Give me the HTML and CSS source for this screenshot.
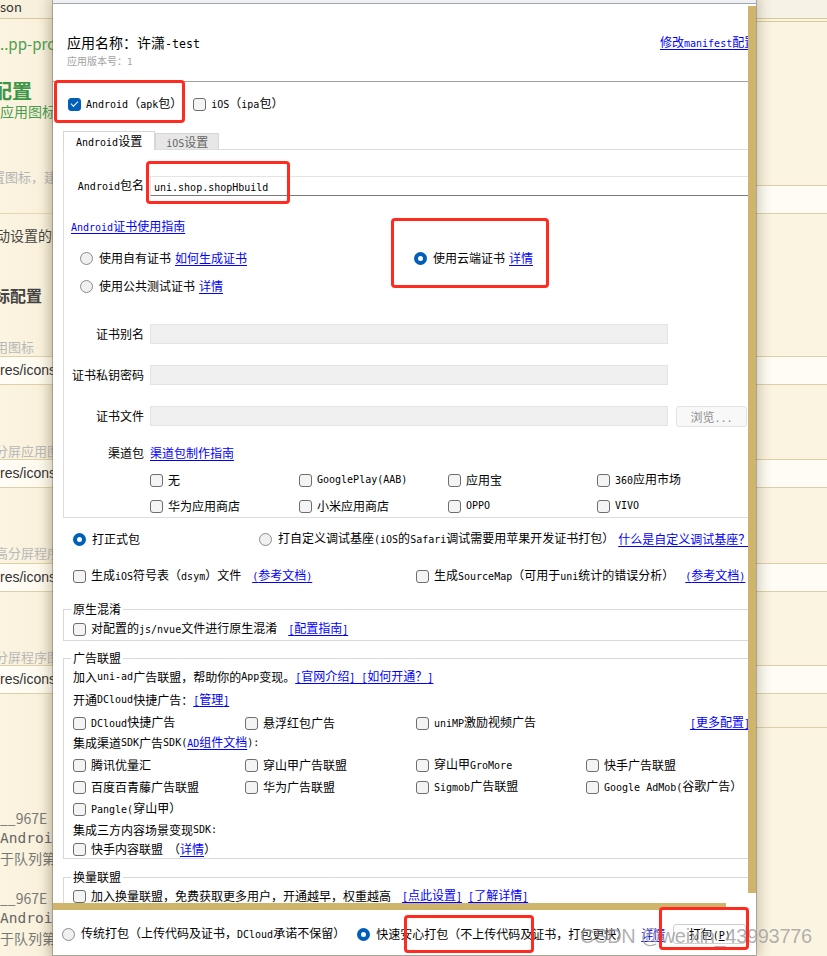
FILE: index.html
```html
<!DOCTYPE html>
<html lang="zh-CN">
<head>
<meta charset="utf-8">
<title>App云端打包</title>
<link rel="stylesheet" href="styles.css">
</head>
<body>
<div class="screen">
  <aside class="bgl">
    <div class="bgl-tab">son</div>
    <div class="bgl-path">..pp-proj</div>
    <div class="bgl-h1">配置</div>
    <div class="bgl-sub">应用图标配</div>
    <div class="bgl-hint">置图标，建议</div>
    <div class="bgl-txt">动设置的图</div>
    <div class="bgl-h2">标配置</div>
    <div class="bgl-lab l1">用图标</div>
    <div class="bgl-inp i1">res/icons/</div>
    <div class="bgl-lab l2">分屏应用图</div>
    <div class="bgl-inp">res/icons/</div>
    <div class="bgl-lab l3">高分屏程序</div>
    <div class="bgl-inp i3">res/icons/</div>
    <div class="bgl-lab l3">分屏程序图</div>
    <div class="bgl-inp">res/icons/</div>
    <div class="bgl-log g1"><p>__967E</p><p class="mono">Androi</p><p>于队列第</p></div>
    <div class="bgl-log g2"><p>__967E</p><p class="mono">Androi</p><p>于队列第</p></div>
  </aside>

  <section class="dlg">
    <div class="dlg-top"></div>
    <div class="dlg-body">
      <div class="main">
        <header class="head">
          <div class="title-row">
            <h1 class="app-name">应用名称：许潇<span class="e14">-test</span></h1>
            <a class="lnk" href="#">修改<span class="e">manifest</span>配置</a>
          </div>
          <p class="ver">应用版本号：<span class="e">1</span></p>
        </header>

        <div class="plat">
          <label class="ck"><i class="cb on"></i><span><span class="e">Android</span>（<span class="e">apk</span>包）</span></label>
          <label class="ck"><i class="cb"></i><span><span class="e">iOS</span>（<span class="e">ipa</span>包）</span></label>
        </div>

        <nav class="tabs">
          <span class="tab act"><span class="e">Android</span>设置</span>
          <span class="tab"><span class="e">iOS</span>设置</span>
        </nav>

        <div class="panel">
          <div class="frow pkg">
            <span class="flab"><span class="e">Android</span>包名</span>
            <span class="pkg-inp"><span class="e">uni.shop.shopHbuild</span></span>
          </div>
          <a class="lnk guide" href="#"><span class="e">Android</span>证书使用指南</a>
          <div class="certs">
            <label class="rb"><i class="ro"></i><span>使用自有证书<a class="lnk ml4" href="#">如何生成证书</a></span></label>
            <label class="rb"><i class="ro on"></i><span>使用云端证书<a class="lnk ml4" href="#">详情</a></span></label>
            <label class="rb"><i class="ro"></i><span>使用公共测试证书<a class="lnk ml4" href="#">详情</a></span></label>
          </div>
          <div class="frow f1"><span class="flab">证书别名</span><span class="finp"></span></div>
          <div class="frow f2"><span class="flab">证书私钥密码</span><span class="finp"></span></div>
          <div class="frow f3"><span class="flab">证书文件</span><span class="finp"></span><button class="browse" type="button">浏览<span class="e">...</span></button></div>
          <div class="frow chan-head"><span class="flab">渠道包</span><a class="lnk" href="#">渠道包制作指南</a></div>
          <div class="chans">
            <label class="ck"><i class="cb"></i><span>无</span></label>
            <label class="ck"><i class="cb"></i><span class="e">GooglePlay(AAB)</span></label>
            <label class="ck"><i class="cb"></i><span>应用宝</span></label>
            <label class="ck"><i class="cb"></i><span><span class="e">360</span>应用市场</span></label>
            <label class="ck"><i class="cb"></i><span>华为应用商店</span></label>
            <label class="ck"><i class="cb"></i><span>小米应用商店</span></label>
            <label class="ck"><i class="cb"></i><span class="e">OPPO</span></label>
            <label class="ck"><i class="cb"></i><span class="e">VIVO</span></label>
          </div>
        </div>

        <div class="runrow">
          <label class="rb w186"><i class="ro on"></i><span>打正式包</span></label>
          <label class="rb"><i class="ro"></i><span>打自定义调试基座<span class="e">(iOS</span>的<span class="e">Safari</span>调试需要用苹果开发证书打包）</span></label>
          <a class="lnk ml4" href="#">什么是自定义调试基座？</a>
        </div>

        <div class="optrow">
          <div class="c343">
            <label class="ck"><i class="cb"></i><span>生成<span class="e">iOS</span>符号表（<span class="e">dsym</span>）文件</span></label>
            <a class="lnk ml11" href="#"><span class="e">(</span>参考文档<span class="e">)</span></a>
          </div>
          <label class="ck"><i class="cb"></i><span>生成<span class="e">SourceMap</span>（可用于<span class="e">uni</span>统计的错误分析）</span></label>
          <a class="lnk ml11" href="#"><span class="e">(</span>参考文档<span class="e">)</span></a>
        </div>

        <fieldset class="fs fs1">
          <legend>原生混淆</legend>
          <div class="frow18">
            <label class="ck"><i class="cb"></i><span>对配置的<span class="e">js/nvue</span>文件进行原生混淆</span></label>
            <a class="lnk ml11" href="#"><span class="e">[</span>配置指南<span class="e">]</span></a>
          </div>
        </fieldset>

        <fieldset class="fs fs2">
          <legend>广告联盟</legend>
          <div class="arow">加入<span class="e">uni-ad</span>广告联盟，帮助你的<span class="e">App</span>变现。<a class="lnk" href="#"><span class="e">[</span>官网介绍<span class="e">] [</span>如何开通？<span class="e">]</span></a></div>
          <div class="arow m1">开通<span class="e">DCloud</span>快捷广告：<a class="lnk" href="#"><span class="e">[</span>管理<span class="e">]</span></a></div>
          <div class="arow g4 m1">
            <label class="ck"><i class="cb"></i><span><span class="e">DCloud</span>快捷广告</span></label>
            <label class="ck"><i class="cb"></i><span>悬浮红包广告</span></label>
            <label class="ck"><i class="cb"></i><span><span class="e">uniMP</span>激励视频广告</span></label>
            <a class="lnk more" href="#"><span class="e">[</span>更多配置<span class="e">]</span></a>
          </div>
          <div class="arow mm2">集成渠道<span class="e">SDK</span>广告<span class="e">SDK(</span><a class="lnk" href="#"><span class="e">AD</span>组件文档</a><span class="e">):</span></div>
          <div class="arow g4">
            <label class="ck"><i class="cb"></i><span>腾讯优量汇</span></label>
            <label class="ck"><i class="cb"></i><span>穿山甲广告联盟</span></label>
            <label class="ck"><i class="cb"></i><span>穿山甲<span class="e">GroMore</span></span></label>
            <label class="ck"><i class="cb"></i><span>快手广告联盟</span></label>
          </div>
          <div class="arow g4">
            <label class="ck"><i class="cb"></i><span>百度百青藤广告联盟</span></label>
            <label class="ck"><i class="cb"></i><span>华为广告联盟</span></label>
            <label class="ck"><i class="cb"></i><span><span class="e">Sigmob</span>广告联盟</span></label>
            <label class="ck"><i class="cb"></i><span><span class="e">Google AdMob(</span>谷歌广告）</span></label>
          </div>
          <div class="arow g4">
            <label class="ck"><i class="cb"></i><span><span class="e">Pangle(</span>穿山甲）</span></label>
          </div>
          <div class="arow mm1">集成三方内容场景变现<span class="e">SDK:</span></div>
          <div class="arow last">
            <label class="ck"><i class="cb"></i><span>快手内容联盟</span></label>
            <span class="ml5">（<a class="lnk" href="#">详情</a>）</span>
          </div>
        </fieldset>

        <fieldset class="fs fs3">
          <legend>换量联盟</legend>
          <div class="frow18">
            <label class="ck"><i class="cb"></i><span>加入换量联盟，免费获取更多用户，开通越早，权重越高</span></label>
            <a class="lnk ml11" href="#"><span class="e">[</span>点此设置<span class="e">]</span></a>
            <a class="lnk ml6" href="#"><span class="e">[</span>了解详情<span class="e">]</span></a>
          </div>
        </fieldset>
      </div>
      <div class="gold-v"></div>
    </div>
    <div class="gold-h"></div>
    <footer class="foot">
      <label class="rb"><i class="ro"></i><span>传统打包（上传代码及证书，<span class="e">DCloud</span>承诺不保留）</span></label>
      <label class="rb ml12"><i class="ro on"></i><span>快速安心打包（不上传代码及证书，打包更快）</span></label>
      <a class="lnk ml13" href="#">详情</a>
      <button class="pack" type="button">打包<span class="e">(<u>P</u>)</span></button>
    </footer>
  </section>

  <aside class="bgr">
    <div class="bgr-tab"></div>
    <div class="bgr-tab2"></div>
    <div class="bgr-band b1"></div>
    <div class="bgr-band b2"></div>
    <div class="bgr-band b3"></div>
    <div class="bgr-band b4"></div>
    <div class="bgr-band b5"></div>
    <div class="bgr-line"></div>
  </aside>
</div>

<div class="mark">CSDN @weixin_43993776</div>
<div class="red r1"></div>
<div class="red r2"></div>
<div class="red r3"></div>
<div class="red r4"></div>
<div class="red r5"></div>
</body>
</html>
```

FILE: styles.css
```css
* { box-sizing: border-box; margin: 0; padding: 0; }
html, body { width: 827px; height: 956px; overflow: hidden; }
body {
  position: relative;
  background: #fbf4e0;
  font-family: "Noto Sans CJK SC", "Liberation Sans", sans-serif;
  font-size: 12px;
  line-height: 16px;
  color: #000;
}
a { color: #0000ff; text-decoration: underline; text-underline-offset: 2px; }
.e { font-family: "DejaVu Sans Mono", "Liberation Mono", monospace; font-size: 10px; }
.e14 { font-family: "DejaVu Sans Mono", "Liberation Mono", monospace; font-size: 11.6px; }
.screen { display: flex; height: 956px; }

/* ---------- background editor (left) ---------- */
.bgl {
  width: 53px; flex: none; overflow: hidden; white-space: nowrap;
  font-size: 14px; line-height: 18px; color: #444;
  background: linear-gradient(to right, #fbf4e0 0, #f9f1dc 80%, #eee6d0 100%);
}
.bgl-tab { height: 19px; border-bottom: 1px solid #d8c99c; font-size: 13px; line-height: 14px; color: #333; background: #f7f0dd; }
.bgl-path { margin-top: 16px; font-size: 15px; color: #4a9d4e; }
.bgl-h1 { margin: 26px 0 0 -8px; font-size: 20px; line-height: 24px; font-weight: bold; color: #3c9646; }
.bgl-sub { font-size: 14px; line-height: 16px; color: #4a9d4e; }
.bgl-hint { margin: 50px 0 0 -8px; height: 45px; border-bottom: 1px solid #e3d7b4; font-size: 13px; line-height: 16px; color: #b5b5b5; }
.bgl-txt { margin: 12px 0 0 -4px; font-size: 14px; line-height: 18px; color: #444; }
.bgl-h2 { margin: 41px 0 0 -6px; font-size: 16px; line-height: 20px; font-weight: bold; color: #444; }
.bgl-lab { margin-left: -5px; font-size: 13px; line-height: 16px; color: #b8b8b8; }
.bgl-lab.l1 { margin-top: 34px; }
.bgl-lab.l2 { margin-top: 58px; }
.bgl-lab.l3 { margin-top: 57px; }
.bgl-inp {
  height: 29px; border-top: 1px solid #ddd0a8; border-bottom: 1px solid #ddd0a8;
  background: linear-gradient(to right, #fffdf7 0, #fdf8ea 100%);
  font-family: "Liberation Sans", sans-serif; font-size: 14px; line-height: 27px; color: #333;
}
.bgl-inp.i1 { margin-top: 1px; }
.bgl-inp.i3 { margin-top: 2px; }
.bgl-log p { height: 20px; font-size: 14px; line-height: 20px; color: #777; }
.bgl-log .mono { font-family: "DejaVu Sans Mono", monospace; font-size: 14.5px; color: #666; }
.bgl-log.g1 { margin-top: 114px; }
.bgl-log.g2 { margin-top: 20px; }

/* ---------- background editor (right) ---------- */
.bgr { flex: 1; overflow: hidden; background: #fbf4e0; }
.bgr-tab { height: 19px; border-bottom: 1px solid #d8c99c; background: #f7f2e6; }
.bgr-tab2 { height: 3px; border-bottom: 1px solid #d8c99c; }
.bgr-band { height: 29px; border-top: 1px solid #ddd0a8; border-bottom: 1px solid #ddd0a8; background: #fefcf4; }
.bgr-band.b1 { margin-top: 163px; }
.bgr-band.b2 { margin-top: 142px; }
.bgr-band.b3 { margin-top: 74px; }
.bgr-band.b4 { margin-top: 75px; }
.bgr-band.b5 { margin-top: 73px; }
.bgr-line { margin-top: 33px; border-top: 1px solid #ddd0a8; }

/* ---------- dialog ---------- */
.dlg {
  position: relative; z-index: 1;
  width: 703px; height: 955px; flex: none;
  background: #fff;
  display: flex; flex-direction: column;
  box-shadow: 0 0 0 1px rgba(80, 80, 80, .35), 0 0 12px 3px rgba(70, 55, 20, .28);
}
.dlg-top { height: 4px; flex: none; background: #eef0f4; border-bottom: 1px solid #a4a7ad; }
.dlg-body { display: flex; height: 899px; flex: none; }
.main { width: 695px; flex: none; overflow: hidden; }
.gold-v { width: 8px; height: 887px; margin-top: 2px; background: #cfb46b; flex: none; }
.gold-h { width: 673px; height: 7px; background: #cfb46b; flex: none; }

.lnk { white-space: nowrap; }
.ml4 { margin-left: 4px; }
.ml5 { margin-left: 5px; }
.ml6 { margin-left: 6px; }
.ml11 { margin-left: 11px; }
.ml12 { margin-left: 12px; }
.ml13 { margin-left: 13px; }

.head { height: 78px; border-bottom: 1px solid #a0a0a0; padding: 29px 0 0 14px; }
.title-row { display: grid; grid-template-columns: 593px auto; align-items: center; height: 18px; white-space: nowrap; }
.app-name { font-size: 14px; font-weight: normal; line-height: 18px; }
.ver { margin-top: 4px; font-size: 10px; line-height: 12px; color: #a3a3a3; }
.ver .e { font-size: 9px; }

/* checkbox / radio */
.ck { display: inline-flex; align-items: center; gap: 5px; white-space: nowrap; line-height: 16px; }
.cb {
  width: 13px; height: 13px; flex: none;
  border: 1px solid #6e6e6e; border-radius: 3px; background: #f4f4f4;
  display: inline-flex; align-items: center; justify-content: center;
}
.cb.on { background: #005fb8; border-color: #005fb8; }
.cb.on::after {
  content: ""; width: 6px; height: 3px;
  border-left: 1px solid #fff; border-bottom: 1px solid #fff;
  transform: translateY(-1px) rotate(-45deg);
}
.rb { display: inline-flex; align-items: center; gap: 6px; white-space: nowrap; line-height: 16px; }
.ro { width: 13px; height: 13px; flex: none; border-radius: 50%; border: 1px solid #8b8b8b; background: #f0f0f0; }
.ro.on { border: 4px solid #005fb8; background: #fff; }

.plat { height: 44px; display: flex; align-items: center; gap: 11px; padding-left: 15px; }

.tabs { margin: 5px 0 0 10px; height: 18px; display: flex; align-items: flex-end; }
.tab {
  height: 16px; padding: 0 10px; border: 1px solid #d6d6d6; border-bottom: 0;
  background: #e7e7e7; color: #666; line-height: 15px; white-space: nowrap;
}
.tab.act { position: relative; z-index: 1; height: 19px; margin-bottom: -1px; padding: 0 12px; background: #fff; color: #000; line-height: 17px; }

.panel { margin: 0 -6px 0 10px; border: 1px solid #dcdcdc; }
.frow { display: flex; align-items: center; height: 20px; white-space: nowrap; }
.flab { width: 80px; flex: none; margin-right: 6px; text-align: right; }
.pkg { margin-top: 26px; }
.pkg-inp { flex: 1; height: 20px; border: 1px solid #e4e4e4; border-bottom-color: #7a7a7a; padding-left: 3px; line-height: 18px; }
.guide { display: block; width: max-content; height: 16px; margin: 22px 0 0 7px; line-height: 16px; }
.certs { margin-top: 14px; padding-left: 16px; display: grid; grid-template-columns: 334px auto; grid-auto-rows: 20px; row-gap: 8px; }
.f1 { margin-top: 28px; }
.f2 { margin-top: 21px; }
.f3 { margin-top: 21px; height: 21px; align-items: flex-start; }
.f3 .flab { line-height: 20px; }
.finp { width: 518px; height: 20px; flex: none; background: #f0f0f0; border: 1px solid #e3e3e3; }
.browse {
  margin-left: 8px; width: 71px; height: 21px;
  border: 1px solid #e2e2e2; border-radius: 3px; background: #f8f8f8;
  color: #8c8c8c; font: inherit; font-size: 12px; line-height: 19px;
}
.chan-head { margin-top: 18px; height: 16px; }
.chans { margin: 10px 0 2px 86px; display: grid; grid-template-columns: repeat(4, 149px); grid-auto-rows: 18px; row-gap: 8px; }

.runrow { margin-top: 11px; height: 20px; display: flex; align-items: center; padding-left: 20px; white-space: nowrap; }
.w186 { width: 186px; flex: none; }
.optrow { margin-top: 17px; height: 20px; display: flex; align-items: center; padding-left: 20px; white-space: nowrap; }
.c343 { width: 343px; flex: none; display: flex; align-items: center; }

.fs { margin: 0 -6px 0 10px; border: 1px solid #d9d9d9; padding: 0 0 0 9px; min-width: 0; }
.fs legend { padding: 0 2px; margin-left: -2px; height: 16px; line-height: 16px; }
.fs1 { margin-top: 15px; padding-top: 3px; padding-bottom: 2px; }
.fs2 { margin-top: 9px; }
.fs3 { margin-top: 10px; padding-top: 2px; padding-bottom: 2px; }
.frow18 { height: 18px; display: flex; align-items: center; white-space: nowrap; }
.arow { height: 22px; display: flex; align-items: center; white-space: nowrap; }
.arow.m1 { margin-top: 1px; }
.arow.mm1 { margin-top: -1px; }
.arow.mm2 { margin-top: -2px; }
.arow.last { height: 18px; margin-top: -1px; }
.g4 { display: grid; grid-template-columns: 172px 171px 170px auto; align-items: center; }
.more { margin-left: 104px; }

.foot { height: 45px; flex: none; padding: 3px 0 0 9px; display: flex; align-items: center; white-space: nowrap; }
.pack {
  margin-left: 8px; width: 73px; height: 20px;
  border: 1px solid #cfcfcf; border-radius: 3px; background: #fdfdfd;
  font: inherit; font-size: 12px; line-height: 18px; color: #000;
}

/* ---------- overlays ---------- */
.mark {
  position: absolute; left: 580px; top: 924px; z-index: 5;
  font-family: "Liberation Sans", sans-serif; font-size: 20px; line-height: 24px; letter-spacing: -0.3px;
  color: rgba(110, 110, 110, .55);
  text-shadow: 0 0 1px rgba(255, 255, 255, .6);
  white-space: nowrap;
}
.red { position: absolute; z-index: 6; border: 3px solid #ff2a20; border-radius: 4px; }
.r1 { left: 54px; top: 80px; width: 131px; height: 43px; }
.r2 { left: 146px; top: 161px; width: 144px; height: 43px; }
.r3 { left: 391px; top: 218px; width: 158px; height: 70px; }
.r4 { left: 404px; top: 915px; width: 130px; height: 38px; }
.r5 { left: 659px; top: 907px; width: 90px; height: 43px; }
```
